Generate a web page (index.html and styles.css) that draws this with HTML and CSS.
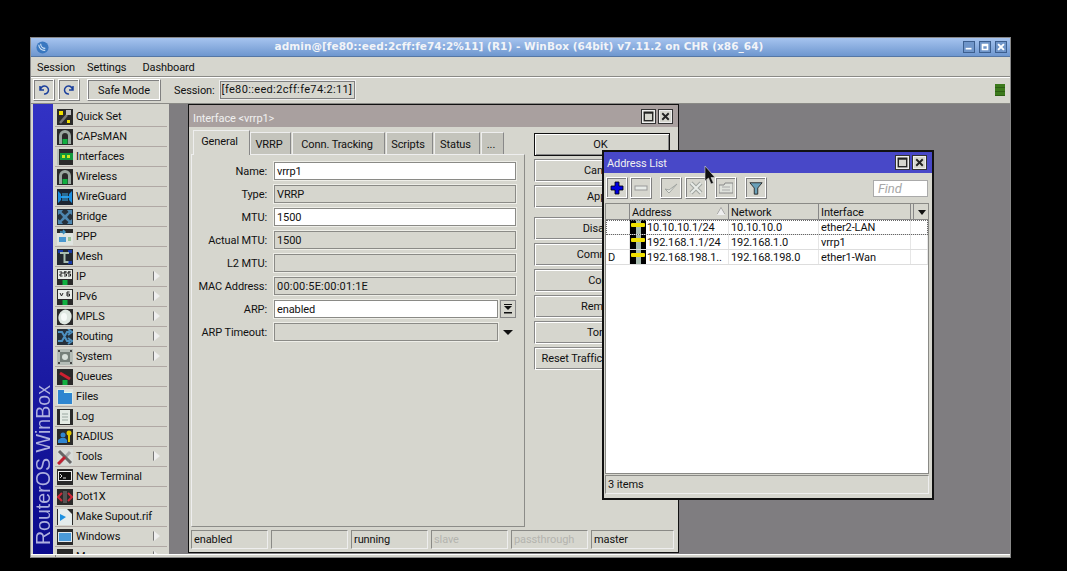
FILE: index.html
```html
<!DOCTYPE html>
<html lang="en">
<head>
  <meta charset="UTF-8" />
  <title>WinBox</title>
  <link rel="stylesheet" href="styles.css">
</head>
<body>
  <svg class="defs" xmlns="http://www.w3.org/2000/svg">
    <symbol id="ico-wifi" viewBox="0 0 16 16">
      <rect width="16" height="16" fill="#2a2a2a"/>
      <path d="M2 15V7a6 6 0 0 1 12 0v8h-3V7a3 3 0 0 0-6 0v8z" fill="#9aa6a0"/>
      <rect x="5.500" y="10" width="5" height="5" fill="#10b040"/>
    </symbol>
    <symbol id="ico-screen" viewBox="0 0 16 16">
      <rect width="16" height="16" fill="#2a2a2a"/>
      <rect x="1" y="1" width="14" height="9" fill="#e8ece8"/>
      <rect x="5.500" y="11" width="5" height="5" fill="#10b040"/>
    </symbol>
    <symbol id="ico-addr" viewBox="0 0 16 14">
      <rect width="16" height="14" fill="#000"/>
      <rect x="6" y="0" width="5" height="14" fill="#a8bcb0"/>
      <rect x="1" y="3" width="14" height="4" rx="1" fill="#f0e000"/>
    </symbol>
  </svg>

  <div class="winbox">
    <header class="titlebar">
      <svg class="app-logo" viewBox="0 0 14 14"><circle cx="7" cy="7" r="6.500" fill="#3a78c0"/><path d="M3 4a6 6 0 0 0 7 6M5 3a5 5 0 0 0 5 5" fill="none" stroke="#cfe2f5" stroke-width="1.200"/></svg>
      <span class="titlebar-text">admin@[fe80::eed:2cff:fe74:2%11] (R1) - WinBox (64bit) v7.11.2 on CHR (x86_64)</span>
      <div class="wm-btns">
        <span class="wm-btn"><svg viewBox="0 0 12 12"><rect x="2" y="7" width="7" height="2" fill="#fff"/></svg></span>
        <span class="wm-btn"><svg viewBox="0 0 12 12"><path d="M2 2h8v8H2z M4 5v3h4V5z" fill="#fff" fill-rule="evenodd"/></svg></span>
        <span class="wm-btn"><svg viewBox="0 0 12 12"><path d="M2.500 2.500l7 7M9.500 2.500l-7 7" stroke="#fff" stroke-width="2.400"/></svg></span>
      </div>
    </header>

    <nav class="menubar">
      <span>Session</span>
      <span>Settings</span>
      <span class="menu-last">Dashboard</span>
    </nav>

    <div class="toolbar">
      <button class="tb-btn"><svg viewBox="0 0 14 14"><path d="M3 3v4h4M3.500 7A4 4 0 1 1 7 11" fill="none" stroke="#1a3f9c" stroke-width="1.500"/></svg></button>
      <button class="tb-btn"><svg viewBox="0 0 14 14"><path d="M11 3v4H7M10.500 7A4 4 0 1 0 7 11" fill="none" stroke="#1a3f9c" stroke-width="1.500"/></svg></button>
      <button class="tb-btn safe-mode">Safe Mode</button>
      <span class="session-label">Session:</span>
      <span class="session-field">[fe80::eed:2cff:fe74:2:11]</span>
      <span class="led"></span>
    </div>

    <div class="main">
      <aside class="sidebar">
        <div class="brand"><span>RouterOS WinBox</span></div>
        <ul class="menu">
          <li><svg viewBox="0 0 16 16"><rect width="16" height="16" fill="#2a2a2a"/><path d="M3 14l7-8" stroke="#777" stroke-width="2.500"/><rect x="9" y="1" width="5" height="5" fill="#bbb"/><rect x="2" y="2" width="4" height="4" fill="#f0e000"/><rect x="10" y="11" width="3" height="3" fill="#f0e000"/></svg>Quick Set</li>
          <li><svg><use href="#ico-wifi"/></svg>CAPsMAN</li>
          <li><svg viewBox="0 0 16 16"><rect width="16" height="16" fill="#2a2a2a"/><rect y="0" width="2" height="16" fill="#b8c0b8"/><rect x="3" y="4" width="13" height="7" fill="#129a3c"/><rect x="5" y="6" width="3" height="3" fill="#cfe820"/><rect x="10" y="6" width="3" height="3" fill="#cfe820"/></svg>Interfaces</li>
          <li><svg><use href="#ico-wifi"/></svg>Wireless</li>
          <li><svg viewBox="0 0 16 16"><rect width="16" height="16" fill="#1c2430"/><path d="M1 2l3 3v2h8V5l3-3v12l-3-3V9H4v2l-3 3z" fill="#1c8fe0"/><path d="M5 4h6v8H5z" fill="#3ab0f0" opacity=".5"/></svg>WireGuard</li>
          <li><svg viewBox="0 0 16 16"><rect width="16" height="16" fill="#26303a"/><path d="M1 1h5L4.500 3 8 6l3.500-3L10 1h5v5l-2-1.500L10 8l3 3.500 2-1.500v5h-5l1.500-2L8 10l-3.500 3L6 15H1v-5l2 1.500L6 8 3 4.500 1 6z" fill="#4d86b0"/></svg>Bridge</li>
          <li><svg viewBox="0 0 16 16"><rect width="16" height="16" fill="#dfe4e0"/><rect width="16" height="4" fill="#2a2a2a"/><path d="M3 3h5M6 1l2 2-2 2" stroke="#3d90c0" stroke-width="1.500" fill="none"/><rect x="2" y="8" width="7" height="5" fill="#4a98d0"/><path d="M11 9h3M11 11h3" stroke="#50a050"/></svg>PPP</li>
          <li><svg viewBox="0 0 16 16"><rect width="16" height="16" fill="#232830"/><rect x="1" y="1" width="5" height="3" fill="#1838a8"/><rect x="11" y="1" width="4" height="3" fill="#1838a8"/><rect x="11" y="12" width="4" height="3" fill="#1838a8"/><path d="M3 4h9M7.500 3v10h4" stroke="#a8bcb0" stroke-width="2" fill="none"/></svg>Mesh</li>
          <li class="has-sub"><svg viewBox="0 0 16 16"><use href="#ico-screen" width="16" height="16"/><path d="M2.500 3h2.500v2H3v2h2.500M7 3H9.500H7v2h2.500v2H7M11 3h2.500H11v2h2.500v2H11" fill="none" stroke="#222"/></svg>IP</li>
          <li class="has-sub"><svg viewBox="0 0 16 16"><use href="#ico-screen" width="16" height="16"/><path d="M3 4l1.500 3L6 4M12.500 3H10v4h2.500V5H10" fill="none" stroke="#222"/></svg>IPv6</li>
          <li class="has-sub"><svg viewBox="0 0 16 16"><rect width="16" height="16" fill="#2a2a2a"/><ellipse cx="8" cy="8" rx="6.500" ry="7.500" fill="#dfe8e2" transform="rotate(20 8 8)"/><ellipse cx="7" cy="8" rx="3" ry="4" fill="#f6faf8"/></svg>MPLS</li>
          <li class="has-sub"><svg viewBox="0 0 16 16"><rect width="16" height="16" fill="#26303a"/><path d="M1 3h4l5 9h3M1 12h4l5-9h3M11 0l4 3-4 3M11 9l4 3-4 3" fill="none" stroke="#4d90c0" stroke-width="2"/></svg>Routing</li>
          <li class="has-sub"><svg viewBox="0 0 16 16"><rect width="16" height="16" fill="#b4bcb6"/><rect x="1" y="1" width="2" height="2" fill="#444"/><rect x="13" y="1" width="2" height="2" fill="#444"/><rect x="1" y="13" width="2" height="2" fill="#444"/><rect x="13" y="13" width="2" height="2" fill="#444"/><rect x="3" y="3" width="10" height="10" fill="#76807a"/><circle cx="8" cy="8" r="3" fill="#d8e0da"/></svg>System</li>
          <li><svg viewBox="0 0 16 16"><rect width="16" height="16" fill="#2a2a2a"/><path d="M3 4l10 6" stroke="#d02030" stroke-width="3"/><rect x="5.500" y="11" width="5" height="5" fill="#10b040"/></svg>Queues</li>
          <li><svg viewBox="0 0 16 16"><rect width="16" height="16" fill="#dfe4e0"/><path d="M1 1h6v2h8v12H1z" fill="#2f86d0"/><rect x="7" y="3" width="8" height="1" fill="#dfe"/></svg>Files</li>
          <li><svg viewBox="0 0 16 16"><rect width="16" height="16" fill="#2a2a2a"/><rect x="3" y="1" width="10" height="14" fill="#e4ebe4"/><path d="M5 5h6M5 8h6M5 11h6" stroke="#9aa8a0"/></svg>Log</li>
          <li><svg viewBox="0 0 16 16"><rect width="16" height="16" fill="#2a2a2a"/><circle cx="6" cy="6" r="2.500" fill="#2f86d0"/><path d="M1 14v-3l3-2h4l2 2v3z" fill="#2f86d0"/><circle cx="12" cy="4" r="2.500" fill="#e0c800"/><rect x="11" y="5" width="2" height="8" fill="#e0c800"/></svg>RADIUS</li>
          <li class="has-sub"><svg viewBox="0 0 16 16"><rect width="16" height="16" fill="#d8dcd8"/><path d="M2 15L13 3" stroke="#a8a8a8" stroke-width="3"/><path d="M2 2l12 12" stroke="#666" stroke-width="3"/><path d="M1 15l7-7" stroke="#c02030" stroke-width="3"/></svg>Tools</li>
          <li><svg viewBox="0 0 16 16"><rect width="16" height="16" fill="#2a2a2a"/><rect x="1" y="2" width="14" height="10" fill="#eee"/><rect x="2" y="3" width="12" height="8" fill="#111"/><path d="M3 5l2 2-2 2M6 9h3" stroke="#ddd" fill="none"/></svg>New Terminal</li>
          <li><svg viewBox="0 0 16 16"><rect width="16" height="16" fill="#2a2a2a"/><path d="M5 4L1 8l4 4M11 4l4 4-4 4" fill="none" stroke="#d02838" stroke-width="2"/><rect x="6" y="2" width="4" height="12" fill="#555"/></svg>Dot1X</li>
          <li><svg viewBox="0 0 16 16"><rect width="16" height="16" fill="#2a2a2a"/><path d="M1 0h9l5 5v11H1z" fill="#e4ecec"/><path d="M3 5l6 3-6 4z" fill="#1c90e0"/></svg>Make Supout.rif</li>
          <li class="has-sub"><svg viewBox="0 0 16 16"><rect width="16" height="16" fill="#2a2a2a"/><rect x="1" y="3" width="14" height="10" fill="#dfe8ee"/><rect x="2" y="4" width="12" height="8" fill="#4a9ad8"/></svg>Windows</li>
          <li class="has-sub"><svg viewBox="0 0 16 16"><rect width="16" height="16" fill="#2a2a2a"/></svg>More</li>
        </ul>
      </aside>

      <section class="desktop">
        <div class="window iface-win">
          <div class="win-title">
            <span class="win-title-text">Interface &lt;vrrp1&gt;</span>
            <span class="win-btns">
              <span class="win-btn"><svg viewBox="0 0 14 14"><rect x="2.500" y="2.500" width="9" height="9" fill="none" stroke="#222" stroke-width="1.400"/><rect x="2" y="2" width="10" height="2" fill="#222"/></svg></span>
              <span class="win-btn"><svg viewBox="0 0 14 14"><path d="M3.500 3.500l7 7M10.500 3.500l-7 7" stroke="#222" stroke-width="2"/></svg></span>
            </span>
          </div>

          <div class="iface-body">
            <div class="tabs-col">
              <div class="tabs">
                <span class="tab active">General</span>
                <span class="tab tab-vrrp">VRRP</span>
                <span class="tab tab-conn">Conn. Tracking</span>
                <span class="tab tab-scripts">Scripts</span>
                <span class="tab tab-status">Status</span>
                <span class="tab tab-more">...</span>
              </div>
              <div class="tab-panel">
                <div class="form-row"><label>Name:</label><span class="field edit">vrrp1</span></div>
                <div class="form-row"><label>Type:</label><span class="field">VRRP</span></div>
                <div class="form-row"><label>MTU:</label><span class="field edit">1500</span></div>
                <div class="form-row"><label>Actual MTU:</label><span class="field">1500</span></div>
                <div class="form-row"><label>L2 MTU:</label><span class="field"></span></div>
                <div class="form-row"><label>MAC Address:</label><span class="field mac">00:00:5E:00:01:1E</span></div>
                <div class="form-row"><label>ARP:</label><span class="field edit">enabled</span><span class="drop-btn"><svg viewBox="0 0 12 12"><path d="M2 1h8v1H2zM2 3h8L6 7zM2 9h8v1.500H2z" fill="#111"/></svg></span></div>
                <div class="form-row"><label>ARP Timeout:</label><span class="field"></span><span class="drop-arrow"></span></div>
              </div>
            </div>
            <div class="side-btns">
              <button class="push default">OK</button>
              <button class="push">Cancel</button>
              <button class="push group-end">Apply</button>
              <button class="push">Disable</button>
              <button class="push">Comment</button>
              <button class="push">Copy</button>
              <button class="push">Remove</button>
              <button class="push">Torch</button>
              <button class="push push-long">Reset Traffic Counters</button>
            </div>
          </div>

          <div class="status-bar">
            <span class="stat">enabled</span>
            <span class="stat"></span>
            <span class="stat">running</span>
            <span class="stat off">slave</span>
            <span class="stat off">passthrough</span>
            <span class="stat wide">master</span>
          </div>
        </div>

        <div class="window addr-win">
          <div class="win-title">
            <span class="win-title-text">Address List</span>
            <span class="win-btns">
              <span class="win-btn"><svg viewBox="0 0 14 14"><rect x="2.500" y="2.500" width="9" height="9" fill="none" stroke="#222" stroke-width="1.400"/><rect x="2" y="2" width="10" height="2" fill="#222"/></svg></span>
              <span class="win-btn"><svg viewBox="0 0 14 14"><path d="M3.500 3.500l7 7M10.500 3.500l-7 7" stroke="#222" stroke-width="2"/></svg></span>
            </span>
          </div>
          <div class="addr-tools">
            <button class="tool"><svg viewBox="0 0 14 14"><path d="M5 1h4v4h4v4H9v4H5V9H1V5h4z" fill="#0000e0" stroke="#000" stroke-width=".8"/></svg></button>
            <button class="tool"><svg viewBox="0 0 14 14"><rect x="1" y="5" width="12" height="4" fill="#e8ece8" stroke="#999"/></svg></button>
            <button class="tool gap-left"><svg viewBox="0 0 14 14"><path d="M1 8l4 4 8-9-8 6z" fill="#eef0ea" stroke="#a0a4a0"/></svg></button>
            <button class="tool tool-x"><svg viewBox="0 0 14 14"><path d="M2 2l10 10M12 2L2 12" stroke="#a0a4a0" stroke-width="4"/><path d="M2 2l10 10M12 2L2 12" stroke="#e8ece8" stroke-width="2"/></svg></button>
            <button class="tool gap-left"><svg viewBox="0 0 14 14"><path d="M0 4h5l1-2h8v10H0z" fill="#dfe2dc" stroke="#888"/><path d="M3 6h8M3 9h8" stroke="#aaa"/></svg></button>
            <button class="tool gap-left"><svg viewBox="0 0 16 16"><path d="M1 2h14L10 8v7H6V8z" fill="#6aa0b8" stroke="#222"/></svg></button>
            <span class="find">Find</span>
          </div>
          <div class="addr-list">
            <div class="grid-row grid-head">
              <span></span>
              <span class="sorted">Address</span>
              <span>Network</span>
              <span>Interface</span>
              <span class="col-menu"></span>
            </div>
            <div class="grid-row focused">
              <span></span>
              <span class="addr-cell"><svg><use href="#ico-addr"/></svg>10.10.10.1/24</span>
              <span>10.10.10.0</span>
              <span>ether2-LAN</span>
              <span></span>
            </div>
            <div class="grid-row">
              <span></span>
              <span class="addr-cell"><svg><use href="#ico-addr"/></svg>192.168.1.1/24</span>
              <span>192.168.1.0</span>
              <span>vrrp1</span>
              <span></span>
            </div>
            <div class="grid-row">
              <span>D</span>
              <span class="addr-cell"><svg><use href="#ico-addr"/></svg>192.168.198.1..</span>
              <span>192.168.198.0</span>
              <span>ether1-Wan</span>
              <span></span>
            </div>
          </div>
          <div class="addr-status">3 items</div>
        </div>

        <svg class="cursor" viewBox="0 0 12 19"><path d="M1 0v15l3.500-3 2.500 6 2.500-1-2.500-5.500H11z" fill="#111" stroke="#ddd" stroke-width=".6"/></svg>
      </section>
    </div>
    <div class="bottom-strip"><span class="strip-left"></span><span class="strip-right"></span></div>
  </div>
</body>
</html>
```

FILE: styles.css
```css
* {
  box-sizing: border-box;
}

body {
  margin: 0;
  height: 571px;
  overflow: hidden;
  background: #000;
  font-family: Roboto, 'Open Sans', sans-serif;
  font-size: 11px;
  letter-spacing: -.1px;
  color: #111;
}

.defs {
  display: none;
}

button {
  font: inherit;
  letter-spacing: inherit;
  color: inherit;
}

.winbox {
  display: flex;
  flex-direction: column;
  width: 981px;
  height: 521px;
  margin: 37px 0 0 30px;
  background: #d6d6ce;
  border: 1px solid #888;
  border-bottom: 0;
}

/* title bar */
.titlebar {
  display: flex;
  align-items: center;
  height: 19px;
  padding: 0 3px 0 5px;
  background: linear-gradient(#a6c4ef, #6e97cf);
  border-bottom: 1px solid #5577a5;
}

.app-logo {
  width: 13px;
  height: 13px;
  flex: none;
}

.titlebar-text {
  flex: 1;
  padding: 0 0 3px 26px;
  text-align: center;
  color: #f2f4f8;
  font-family: 'DejaVu Sans', sans-serif;
  font-size: 10.5px;
  font-weight: 700;
  letter-spacing: .05px;
  white-space: nowrap;
}

.wm-btns {
  display: flex;
  gap: 4px;
}

.wm-btn {
  width: 12px;
  height: 12px;
  background: #6f95c9;
  border: 1px solid #3d5f8f;
}

.wm-btn svg {
  display: block;
  width: 100%;
  height: 100%;
}

.menubar {
  display: flex;
  gap: 12px;
  align-items: center;
  height: 20px;
  padding: 1px 0 0 6px;
  border-bottom: 1px solid #8a8a86;
}

.menu-last {
  margin-left: 4px;
}

.toolbar {
  display: flex;
  align-items: center;
  height: 27px;
  padding: 0 0 2px 2px;
  border-top: 1px solid #fff;
  border-bottom: 1px solid #8a8a86;
}

.tb-btn {
  display: flex;
  align-items: center;
  justify-content: center;
  width: 22px;
  height: 22px;
  margin-right: 3px;
  padding: 0;
  background: #d6d6ce;
  border: 1px solid;
  border-color: #fff #808080 #808080 #fff;
  box-shadow: inset -1px -1px 0 #fff, inset 1px 1px 0 #808080;
}

.tb-btn svg {
  width: 14px;
  height: 14px;
}

.safe-mode {
  width: 74px;
  margin: 0 13px 0 4px;
  padding-top: 1px;
}

.session-label {
  padding-top: 1px;
}

.session-field {
  width: 135px;
  height: 18px;
  margin-left: 5px;
  padding-left: 1px;
  line-height: 16px;
  letter-spacing: .35px;
  border: 1px solid #808080;
  outline: 1px solid #eee;
  white-space: nowrap;
}

.led {
  width: 10px;
  height: 12px;
  margin-left: auto;
  margin-right: 5px;
  background: repeating-linear-gradient(#3c7a1c 0 3px, #2d5f14 3px 4px);
}

.main {
  display: flex;
  flex: 1;
  min-height: 0;
}

/* left menu */
.sidebar {
  display: flex;
  flex: none;
  width: 138px;
  padding: 0 2px;
  overflow: hidden;
}

.brand {
  display: flex;
  flex: none;
  align-items: flex-end;
  justify-content: center;
  width: 20px;
  padding-bottom: 9px;
  background: linear-gradient(#3232c4, #0b0b8c);
}

.brand span {
  writing-mode: vertical-rl;
  transform: rotate(180deg);
  color: #aeb0e0;
  font-family: 'Liberation Sans', sans-serif;
  font-size: 19.6px;
  letter-spacing: 0;
  line-height: 20px;
  white-space: nowrap;
}

.menu {
  flex: 1;
  margin: 3px 0 0 2px;
  padding: 0;
  list-style: none;
}

.menu li {
  position: relative;
  display: flex;
  align-items: center;
  height: 20px;
  padding-left: 2px;
  gap: 3px;
  border-bottom: 1px solid #b0a8a4;
  white-space: nowrap;
}

.menu li svg {
  width: 16px;
  height: 16px;
  flex: none;
}

.has-sub::after {
  content: "";
  position: absolute;
  right: 7px;
  top: 4px;
  border-left: 6px solid #eee;
  border-top: 5px solid transparent;
  border-bottom: 5px solid transparent;
  filter: drop-shadow(-1px 0 0 #777);
}

/* desktop area */
.desktop {
  position: relative;
  flex: 1;
  background: #7f7d80;
  overflow: hidden;
}

.window {
  position: absolute;
  display: flex;
  flex-direction: column;
  background: #d6d6ce;
  border: 1px solid #111;
}

.iface-win {
  left: 19px;
  top: 0;
  width: 491px;
  height: 449px;
}

.addr-win {
  left: 434px;
  top: 47px;
  width: 330px;
  height: 348px;
  outline: 1px solid #111;
}

.win-title {
  display: flex;
  align-items: center;
  justify-content: space-between;
  height: 22px;
  flex: none;
  padding: 0 5px 0 4px;
  color: #f0f0f0;
  background: #a9a09f;
}

.win-title-text {
  padding-top: 5px;
}

.addr-win .win-title {
  height: 21px;
  padding-left: 3px;
  background: #4848c8;
}

.addr-win .win-title-text {
  padding-top: 1px;
}

.win-btns {
  display: flex;
  gap: 2px;
}

.win-btn {
  width: 15px;
  height: 15px;
  background: #d6d6ce;
  border: 1px solid #333;
  outline: 1px solid #eee;
  outline-offset: -2px;
}

.win-btn svg {
  display: block;
  width: 100%;
  height: 100%;
}

/* interface window */
.iface-body {
  display: flex;
  flex: 1;
  min-height: 0;
  padding: 2px 0 0 2px;
}

.tabs-col {
  display: flex;
  flex-direction: column;
  flex: none;
  width: 334px;
}

.tabs {
  display: flex;
  align-items: flex-end;
  height: 25px;
  padding-left: 2px;
}

.tab {
  display: flex;
  align-items: center;
  justify-content: center;
  height: 22px;
  margin-right: 1px;
  padding: 1px 3px 0 0;
  background: #c4c4bc;
  border-top: 1px solid #eee;
  border-left: 1px solid #eee;
  border-right: 1px solid #888;
}

.tab.active {
  width: 57px;
  height: 25px;
  margin-right: 0;
  padding: 0 4px 3px 0;
  background: #d6d6ce;
  position: relative;
  top: 1px;
}

.tab-vrrp { width: 41px; }
.tab-conn { width: 93px; }
.tab-scripts { width: 47px; }
.tab-status { width: 46px; }
.tab-more { width: 23px; }

.tab-panel {
  flex: 1;
  display: flex;
  flex-direction: column;
  gap: 5px;
  padding-top: 7px;
  border: 1px solid #8c8c88;
  border-top-color: #eee;
  border-left-color: #eee;
}

.form-row {
  display: flex;
  align-items: center;
  flex: none;
  height: 18px;
  padding-right: 8px;
}

.form-row label {
  flex: none;
  width: 75px;
  margin-right: 7px;
  text-align: right;
  white-space: nowrap;
}

.field {
  flex: 1;
  height: 18px;
  padding-left: 2px;
  line-height: 17px;
  border: 1px solid #8a8a86;
  outline: 1px solid #eeeee8;
  outline-offset: 0;
}

.field.edit {
  background: #fff;
}

.field.mac {
  letter-spacing: .2px;
}

.drop-btn {
  display: flex;
  align-items: center;
  justify-content: center;
  width: 16px;
  height: 18px;
  margin-left: 2px;
  border: 1px solid #888;
}

.drop-btn svg {
  width: 12px;
  height: 12px;
}

.drop-arrow {
  width: 16px;
  margin-left: 2px;
  padding-left: 3px;
}

.drop-arrow::after {
  content: "";
  display: block;
  width: 0;
  border-top: 5px solid #111;
  border-left: 5px solid transparent;
  border-right: 5px solid transparent;
}

.side-btns {
  display: flex;
  flex-direction: column;
  gap: 3px;
  width: 136px;
  margin: 4px 0 0 9px;
}

.push {
  flex: none;
  height: 23px;
  padding: 0 3px 0 0;
  background: #d6d6ce;
  border: 1px solid;
  border-color: #888 #fff #fff #888;
  box-shadow: inset 1px 1px 0 #fff, inset -1px -1px 0 #888;
  white-space: nowrap;
  overflow: hidden;
}

.push.default {
  border: 1px solid #111;
}

.push-long {
  padding-right: 14px;
}

.group-end {
  margin-bottom: 6px;
}

.status-bar {
  display: flex;
  gap: 3px;
  flex: none;
  height: 19px;
  margin: 3px 0;
  padding: 0 4px 0 2px;
}

.stat {
  width: 77px;
  height: 19px;
  padding: 1px 0 0 2px;
  line-height: 16px;
  border: 1px solid;
  border-color: #8a8a86 #eee #eee #8a8a86;
}

.stat.off {
  color: #b4b4ae;
}

.stat.wide {
  flex: 1;
}

/* address list window */
.addr-tools {
  display: flex;
  align-items: center;
  gap: 2px;
  flex: none;
  height: 28px;
  padding: 2px 4px 0 2px;
}

.tool {
  display: flex;
  align-items: center;
  justify-content: center;
  flex: none;
  width: 22px;
  height: 22px;
  padding: 0;
  background: #d6d6ce;
  border: 1px solid;
  border-color: #fff #808080 #808080 #fff;
  box-shadow: inset -1px -1px 0 #fff, inset 1px 1px 0 #808080;
}

.tool svg {
  width: 14px;
  height: 14px;
}

.gap-left {
  margin-left: 6px;
}

.tool-x {
  margin-left: 1px;
}

.find {
  width: 55px;
  height: 17px;
  margin-left: auto;
  padding-left: 4px;
  line-height: 15px;
  color: #a8a8a8;
  font-size: 13px;
  font-style: italic;
  background: #fff;
  border: 1px solid #aaa;
}

.addr-list {
  flex: 1;
  margin: 2px 3px 0 1px;
  background: #fff;
  border: 1px solid #8a8a86;
}

.grid-row {
  display: grid;
  grid-template-columns: 24px 99px 90px 92px 1fr;
  height: 15px;
  line-height: 16px;
  border-bottom: 1px solid #ddd;
}

.grid-row > span {
  padding-left: 2px;
  border-right: 1px solid #e6e6e6;
  white-space: nowrap;
  overflow: hidden;
}

.grid-head {
  height: 16px;
  line-height: 17px;
  background: #d6d6ce;
  border-bottom: 1px solid #888;
}

.grid-row.grid-head > span {
  border-right: 1px solid #888;
}

.grid-row.grid-head > .col-menu {
  border-right: 0;
  box-shadow: inset 2px 0 0 #d6d6ce, inset 3px 0 0 #888;
}

.focused {
  outline: 1px dotted #666;
  outline-offset: -1px;
}

.grid-row > .addr-cell {
  display: flex;
  gap: 1px;
  padding-left: 0;
}

.addr-cell svg {
  width: 16px;
  height: 14px;
  flex: none;
}

.sorted {
  position: relative;
}

.sorted::after {
  content: "";
  position: absolute;
  right: 3px;
  top: 4px;
  border-bottom: 7px solid #eee;
  border-left: 4px solid transparent;
  border-right: 4px solid transparent;
  filter: drop-shadow(0 -1px 0 #888);
}

.col-menu {
  position: relative;
}

.col-menu::after {
  content: "";
  position: absolute;
  left: 7px;
  top: 6px;
  border-top: 5px solid #111;
  border-left: 4px solid transparent;
  border-right: 4px solid transparent;
}

.addr-status {
  flex: none;
  height: 19px;
  margin: 1px 3px 4px 1px;
  padding: 1px 0 0 2px;
  line-height: 16px;
  border: 1px solid;
  border-color: #8a8a86 #eee #eee #8a8a86;
}

.cursor {
  position: absolute;
  left: 535px;
  top: 62px;
  width: 12px;
  height: 19px;
}

.bottom-strip {
  display: flex;
  flex: none;
  height: 4px;
  background: #d6d6ce;
  border-top: 1px solid #fff;
  border-bottom: 1px solid #888;
}

.strip-left {
  width: 25px;
  border-right: 1px solid #888;
}
```
